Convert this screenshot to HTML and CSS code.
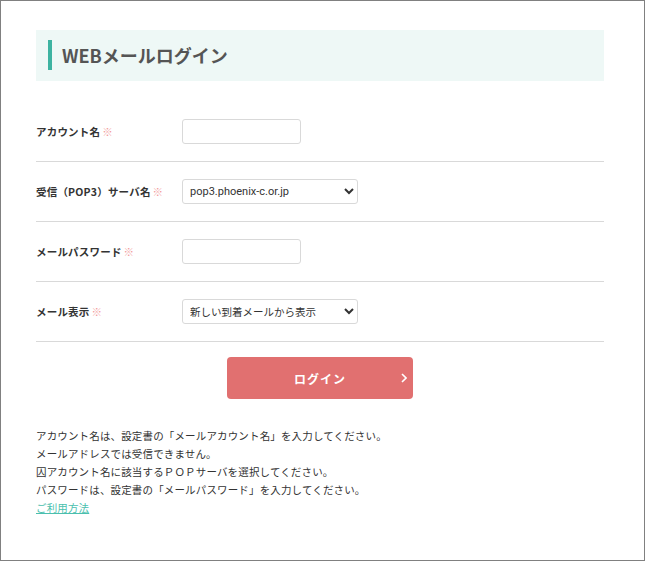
FILE: index.html
```html
<!DOCTYPE html>
<html>
  <head>
    <meta charset="utf-8">
    <meta name="viewport" content="width=device-width,initial-scale=1.0">
    <title>WEBメールログイン</title>
    <link rel="stylesheet" href="styles.css">
  </head>
  <body>
    <div class="frame">
      <header class="pageHead">
        <h1 class="pageTitle">WEBメールログイン</h1>
      </header>

      <form class="loginForm" action="">
        <div class="formRow">
          <label class="formLabel" for="account">アカウント名<span class="req">※</span></label>
          <input class="textInput" id="account" type="text" autocomplete="off">
        </div>
        <div class="formRow">
          <label class="formLabel" for="server">受信（POP3）サーバ名<span class="req">※</span></label>
          <select class="selInput" id="server">
            <option>pop3.phoenix-c.or.jp</option>
          </select>
        </div>
        <div class="formRow">
          <label class="formLabel" for="pass">メールパスワード<span class="req">※</span></label>
          <input class="textInput" id="pass" type="password">
        </div>
        <div class="formRow">
          <label class="formLabel" for="order">メール表示<span class="req">※</span></label>
          <select class="selInput jp" id="order">
            <option>新しい到着メールから表示</option>
          </select>
        </div>

        <div class="btnWrap">
          <button class="loginBtn" type="button">
            ログイン
            <svg class="chev" width="6" height="10" viewBox="0 0 6 10">
              <polyline points="1,1 5,5 1,9" fill="none" stroke="#fff" stroke-width="1.6"/>
            </svg>
          </button>
        </div>
      </form>

      <div class="notes">
        <p>アカウント名は、設定書の「メールアカウント名」を入力してください。</p>
        <p>メールアドレスでは受信できません。</p>
        <p>囚アカウント名に該当するＰＯＰサーバを選択してください。</p>
        <p>パスワードは、設定書の「メールパスワード」を入力してください。</p>
        <p><a class="helpLink" href="#">ご利用方法</a></p>
      </div>
    </div>
  </body>
</html>
```

FILE: styles.css
```css
body
{
  margin: 0;
  padding: 0;
  font-family: "Noto Sans CJK JP", "Noto Sans", sans-serif;
  color: #333;
}
.frame{
  width: 645px;
  height: 561px;
  box-sizing: border-box;
  border: 1px solid #808080;
  padding: 29px 40px 0 35px;
}
.pageHead{
  background-color: #eef8f6;
  padding: 10px 12px 11px;
}
.pageTitle{
  margin: 0;
  border-left: 4px solid #3db3a1;
  padding-left: 10px;
  font-size: 18px;
  line-height: 30px;
  font-weight: 700;
  color: #555;
}
.loginForm{
  margin-top: 21px;
}
.formRow{
  display: flex;
  align-items: center;
  padding: 17px 0;
  border-bottom: 1px solid #d9d9d9;
}
.formLabel{
  width: 146px;
  flex-shrink: 0;
  font-size: 10.5px;
  font-weight: 700;
  line-height: 16px;
  letter-spacing: 0.2px;
}
.req{
  margin-left: 2px;
  color: #f29a9a;
  font-weight: 400;
}
.textInput{
  width: 119px;
  height: 25px;
  box-sizing: border-box;
  border: 1px solid #d9d9d9;
  border-radius: 3px;
  margin: 0;
  padding: 0 6px;
}
.selInput{
  width: 176px;
  height: 25px;
  box-sizing: border-box;
  border: 1px solid #d9d9d9;
  border-radius: 3px;
  margin: 0;
  padding: 0 3px;
  background: #fff;
  font-family: Roboto, "Liberation Sans", sans-serif;
  font-size: 11px;
  color: #333;
}
.selInput.jp{
  font-family: "Noto Sans CJK JP", sans-serif;
  font-size: 10.5px;
}
.btnWrap{
  display: flex;
  justify-content: center;
  margin-top: 15px;
}
.loginBtn{
  position: relative;
  width: 186px;
  height: 42px;
  border: none;
  border-radius: 4px;
  background-color: #e17070;
  color: #fff;
  font-family: "Noto Sans CJK JP", sans-serif;
  font-size: 12px;
  font-weight: 700;
  letter-spacing: 1px;
}
.chev{
  position: absolute;
  right: 6px;
  top: 16px;
}
.notes{
  margin-top: 28px;
  font-size: 10.5px;
  line-height: 18px;
  letter-spacing: 0.15px;
}
.notes p{
  margin: 0;
}
.helpLink{
  color: #4bbfae;
}
```
